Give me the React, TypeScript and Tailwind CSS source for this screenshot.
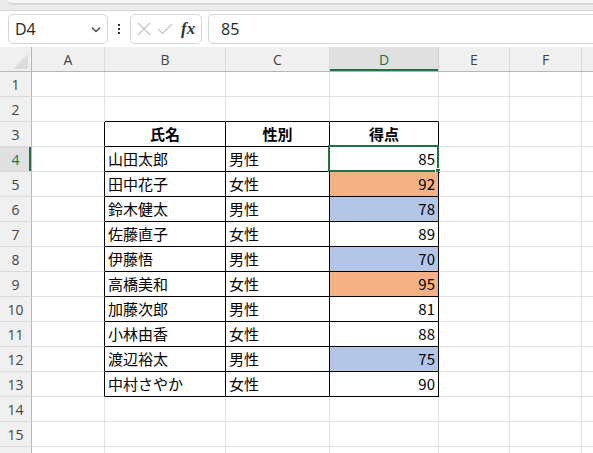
import React from "react";

const cols = [
  { key: "A", w: 73 },
  { key: "B", w: 121 },
  { key: "C", w: 104 },
  { key: "D", w: 109 },
  { key: "E", w: 71 },
  { key: "F", w: 72 },
  { key: "G", w: 60 },
];

type Row = { name: string; sex: string; score: number; fill?: string };

const data: Row[] = [
  { name: "山田太郎", sex: "男性", score: 85 },
  { name: "田中花子", sex: "女性", score: 92, fill: "bg-[#f4b183]" },
  { name: "鈴木健太", sex: "男性", score: 78, fill: "bg-[#b4c6e7]" },
  { name: "佐藤直子", sex: "女性", score: 89 },
  { name: "伊藤悟", sex: "男性", score: 70, fill: "bg-[#b4c6e7]" },
  { name: "高橋美和", sex: "女性", score: 95, fill: "bg-[#f4b183]" },
  { name: "加藤次郎", sex: "男性", score: 81 },
  { name: "小林由香", sex: "女性", score: 88 },
  { name: "渡辺裕太", sex: "男性", score: 75, fill: "bg-[#b4c6e7]" },
  { name: "中村さやか", sex: "女性", score: 90 },
];

const jp = "font-['Noto_Sans_CJK_JP',sans-serif]";

function FormulaBar() {
  return (
    <div className="flex h-[36px] items-center bg-white pl-2">
      <div className="flex h-[30px] w-[100px] items-center justify-between rounded-[5px] border border-[#d4d4d4] pl-[6px] pr-[5px] text-[16px] text-[#262626] font-['Open_Sans',sans-serif]">
        <span>D4</span>
        <svg width="12" height="12" viewBox="0 0 12 12" fill="none">
          <path d="M2 4.5 6 8.5 10 4.5" stroke="#444" strokeWidth="1.3" />
        </svg>
      </div>
      <div className="flex w-[22px] flex-col items-center gap-[2px]">
        <span className="h-[2px] w-[2px] bg-[#333]" />
        <span className="h-[2px] w-[2px] bg-[#333]" />
        <span className="h-[2px] w-[2px] bg-[#333]" />
      </div>
      <div className="flex h-[30px] w-[72px] items-center gap-[6px] rounded-[5px] border border-[#d4d4d4] pl-[6px]">
        <svg width="14" height="14" viewBox="0 0 14 14" fill="none">
          <path d="M1 1 13 13 M13 1 1 13" stroke="#c4c4c4" strokeWidth="1.2" />
        </svg>
        <svg width="16" height="12" viewBox="0 0 16 12" fill="none">
          <path d="M1 6 5.5 10.5 15 1" stroke="#c4c4c4" strokeWidth="1.2" />
        </svg>
        <span className="ml-[2px] text-[17px] font-bold italic text-[#333] font-['Liberation_Serif',serif]">
          fx
        </span>
      </div>
      <div className="ml-[6px] flex h-[30px] flex-1 items-center rounded-l-[5px] border border-r-0 border-[#d4d4d4] pl-[12px] text-[16px] text-[#262626] font-['Open_Sans',sans-serif]">
        85
      </div>
    </div>
  );
}

function HeaderRow() {
  return (
    <div className="flex h-[25px] border-b border-[#b5b5b5] bg-[#f0f0f0] text-[14px] text-[#444] font-['Open_Sans',sans-serif]">
      <div className="relative w-[32px] shrink-0 border-r border-[#b5b5b5]">
        <div className="absolute bottom-[2px] right-[3px] h-0 w-0 border-b-[15px] border-l-[15px] border-b-[#dcdcdc] border-l-transparent" />
      </div>
      {cols.map((c) => (
        <div
          key={c.key}
          style={{ width: c.w }}
          className={`flex shrink-0 items-center justify-center border-r ${
            c.key === "D"
              ? "border-[#d0d0d0] bg-[#e0e0e0] text-[#217346] shadow-[inset_0_-2px_0_#217346]"
              : "border-[#dadada]"
          }`}
        >
          {c.key === "G" ? null : c.key}
        </div>
      ))}
    </div>
  );
}

function Cell({
  w,
  children,
  className = "",
}: {
  w: number;
  children?: React.ReactNode;
  className?: string;
}) {
  return (
    <div
      style={{ width: w }}
      className={`relative flex shrink-0 items-center border-b border-r ${className}`}
    >
      {children}
    </div>
  );
}

export default function App() {
  const rows = Array.from({ length: 16 }, (_, i) => i + 1);

  return (
    <div className="h-[453px] w-[593px] overflow-hidden bg-white">
      <div className="relative h-[11px] border-b border-[#d6d6d6] bg-[#ececec]">
        <div className="absolute left-[8px] top-0 h-[3px] w-[590px] rounded-b-[5px] bg-[#f8f8f8] shadow-[0_1px_2px_rgba(0,0,0,0.15)]" />
      </div>
      <FormulaBar />
      <HeaderRow />
      {rows.map((r) => {
        const inTable = r >= 3 && r <= 13;
        const d = r >= 4 && r <= 13 ? data[r - 4] : null;
        const selected = r === 4;
        return (
          <div key={r} className="flex h-[25px]">
            <div
              className={`flex w-[32px] shrink-0 items-center justify-center border-b border-r border-b-[#dadada] border-r-[#b5b5b5] text-[14px] font-['Open_Sans',sans-serif] ${
                selected
                  ? "bg-[#e0e0e0] text-[#217346] shadow-[inset_-2px_0_0_#217346]"
                  : "bg-[#f0f0f0] text-[#444]"
              }`}
            >
              {r <= 15 ? r : null}
            </div>
            {cols.map((c) => {
              const isTableCol = c.key === "B" || c.key === "C" || c.key === "D";
              const tableCell = inTable && isTableCol;
              const aboveTable = r === 2 && isTableCol;
              const leftOfTable = inTable && c.key === "A";
              let border = "border-[#e1e1e1]";
              if (tableCell) border = "border-black";
              else if (aboveTable) border = "border-r-[#e1e1e1] border-b-black";
              else if (leftOfTable) border = "border-b-[#e1e1e1] border-r-black";

              let content: React.ReactNode = null;
              let extra = "";
              if (r === 3 && isTableCol) {
                content = c.key === "B" ? "氏名" : c.key === "C" ? "性別" : "得点";
                extra = "justify-center font-bold";
              } else if (d && c.key === "B") {
                content = d.name;
                extra = "pl-[3px]";
              } else if (d && c.key === "C") {
                content = d.sex;
                extra = "pl-[3px]";
              } else if (d && c.key === "D") {
                content = d.score;
                extra = `justify-end pr-[3px] ${d.fill ?? ""}`;
              }

              return (
                <Cell
                  key={c.key}
                  w={c.w}
                  className={`${border} ${extra} text-[15px] text-black ${jp}`}
                >
                  {content}
                  {selected && c.key === "D" && (
                    <div className="pointer-events-none absolute -left-[2px] -top-[2px] h-[27px] w-[111px] border-2 border-[#217346]">
                      <div className="absolute -bottom-[4px] -right-[4px] h-[6px] w-[6px] border border-white bg-[#217346]" />
                    </div>
                  )}
                </Cell>
              );
            })}
          </div>
        );
      })}
    </div>
  );
}
